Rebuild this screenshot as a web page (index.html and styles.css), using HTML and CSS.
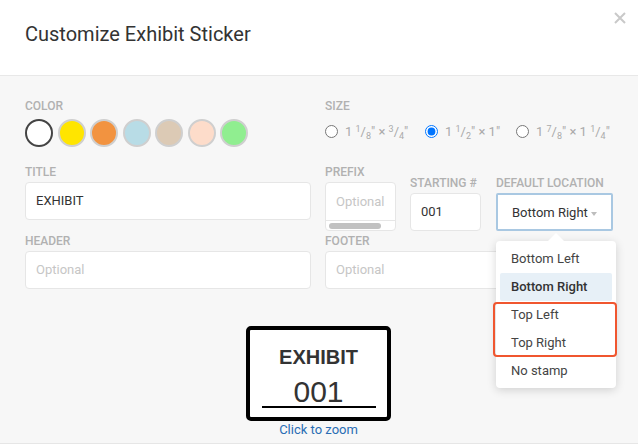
FILE: index.html
```html
<!DOCTYPE html>
<html lang="en">
<head>
    <meta charset="UTF-8">
    <meta name="viewport" content="width=device-width, initial-scale=1.0">
    <title>Customize Exhibit Sticker</title>
    <link rel="stylesheet" href="styles.css">
</head>
<body>
    <div class="modal">
        <div class="modal-header">
            <h1>Customize Exhibit Sticker</h1>
            <button class="close" type="button" aria-label="Close">
                <svg width="12" height="12" viewBox="0 0 12 12"><path d="M1 1L11 11M11 1L1 11" stroke="#c9c9c9" stroke-width="2"/></svg>
            </button>
        </div>

        <div class="modal-body">
            <div class="form-grid">
                <div class="col">
                    <label class="field-label color-label">Color</label>
                    <div class="swatches">
                        <span class="swatch selected" style="background:#ffffff"></span>
                        <span class="swatch" style="background:#ffe500"></span>
                        <span class="swatch" style="background:#f29340"></span>
                        <span class="swatch" style="background:#b8dce6"></span>
                        <span class="swatch" style="background:#dccab5"></span>
                        <span class="swatch" style="background:#fddcca"></span>
                        <span class="swatch" style="background:#90ee90"></span>
                    </div>

                    <div class="field title-field">
                        <label class="field-label">Title</label>
                        <div class="input">EXHIBIT</div>
                    </div>

                    <div class="field header-field">
                        <label class="field-label">Header</label>
                        <div class="input placeholder">Optional</div>
                    </div>
                </div>

                <div class="col">
                    <label class="field-label">Size</label>
                    <div class="sizes">
                        <label class="size size-1">
                            <input type="radio" name="size">
                            <span>1 <span class="frac"><sup>1</sup>/<sub>8</sub></span>" &times; <span class="frac"><sup>3</sup>/<sub>4</sub></span>"</span>
                        </label>
                        <label class="size size-2">
                            <input type="radio" name="size" checked>
                            <span>1 <span class="frac"><sup>1</sup>/<sub>2</sub></span>" &times; 1"</span>
                        </label>
                        <label class="size">
                            <input type="radio" name="size">
                            <span>1 <span class="frac"><sup>7</sup>/<sub>8</sub></span>" &times; 1 <span class="frac"><sup>1</sup>/<sub>4</sub></span>"</span>
                        </label>
                    </div>

                    <div class="numbering">
                        <div class="prefix">
                            <label class="field-label">Prefix</label>
                            <div class="input scroll-input">
                                <div class="placeholder">Optional</div>
                                <div class="scrollbar"><span class="thumb"></span></div>
                            </div>
                        </div>
                        <div class="starting">
                            <label class="field-label">Starting #</label>
                            <div class="input">001</div>
                        </div>
                        <div class="location">
                            <label class="field-label">Default Location</label>
                            <div class="select">
                                <span>Bottom Right</span>
                                <span class="arrow"></span>
                            </div>

                            <!-- open dropdown -->
                            <div class="dropdown">
                                <div class="option">Bottom Left</div>
                                <div class="option active">Bottom Right</div>
                                <div class="option-group">
                                    <div class="option">Top Left</div>
                                    <div class="option">Top Right</div>
                                </div>
                                <div class="option">No stamp</div>
                            </div>
                        </div>
                    </div>

                    <div class="field footer-field">
                        <label class="field-label">Footer</label>
                        <div class="input placeholder">Optional</div>
                    </div>
                </div>
            </div>

            <div class="preview">
                <div class="sticker">
                    <div class="sticker-title">EXHIBIT</div>
                    <div class="sticker-number">001</div>
                </div>
                <a class="zoom-link" href="#">Click to zoom</a>
            </div>
        </div>
    </div>
</body>
</html>
```

FILE: styles.css
```css
body {
    margin: 0;
    background-color: #fff;
    font-family: Roboto, "Liberation Sans", sans-serif;
    color: #333;
}
.modal-header {
    height: 76px;
    box-sizing: border-box;
    display: flex;
    justify-content: space-between;
    align-items: flex-start;
    padding: 0 12px 0 25px;
    border-bottom: 1px solid #e8e8e8;
}
.modal-header h1 {
    margin: 22px 0 0;
    font-size: 20px;
    line-height: 24px;
    font-weight: 400;
    color: #333;
}
.close {
    margin-top: 12px;
    padding: 0;
    border: none;
    background: none;
    width: 12px;
    height: 12px;
    cursor: pointer;
}
.close svg {
    display: block;
}
.modal-body {
    height: 368px;
    box-sizing: border-box;
    background-color: #f7f7f7;
    border-bottom: 1px solid #e6e6e6;
    padding: 23px 25px 0;
}
.form-grid {
    display: grid;
    grid-template-columns: 286px 288px;
    column-gap: 14px;
}
.field-label {
    display: block;
    font-size: 12px;
    line-height: 14px;
    font-weight: 500;
    color: #b1b1b1;
    text-transform: uppercase;
    margin-bottom: 3px;
}
.color-label {
    margin-bottom: 6px;
}
.swatches {
    display: flex;
    gap: 4.5px;
}
.swatch {
    width: 28px;
    height: 28px;
    box-sizing: border-box;
    border-radius: 50%;
    border: 2px solid #cfcfcf;
}
.swatch.selected {
    border-color: #444;
}
.title-field {
    margin-top: 18px;
}
.header-field {
    margin-top: 14px;
}
.input {
    height: 38px;
    box-sizing: border-box;
    background: #fff;
    border: 1px solid #e6e6e6;
    border-radius: 4px;
    padding: 0 10px;
    font-size: 13px;
    line-height: 36px;
    color: #333;
}
.placeholder {
    color: #c6c6c6;
}
.sizes {
    display: flex;
    align-items: center;
    height: 20px;
    margin-top: 8px;
}
.size {
    display: flex;
    align-items: center;
    gap: 7px;
    font-size: 13px;
    color: #aaa;
    white-space: nowrap;
}
.size-1 {
    width: 100px;
}
.size-2 {
    width: 91px;
}
.size input {
    margin: 0;
    width: 13px;
    height: 13px;
}
.frac sup,
.frac sub {
    font-size: 9px;
    line-height: 0;
}
.frac sup {
    vertical-align: 4px;
}
.frac sub {
    vertical-align: -3px;
}
.numbering {
    display: flex;
    align-items: flex-end;
    margin-top: 24px;
}
.prefix {
    width: 71px;
}
.starting {
    width: 71px;
    margin-left: 14px;
}
.location {
    width: 117px;
    margin-left: 15px;
    position: relative;
}
.scroll-input {
    height: 49px;
    padding: 0;
    line-height: normal;
}
.scroll-input .placeholder {
    height: 37px;
    line-height: 37px;
    padding-left: 10px;
}
.scrollbar {
    border-top: 1px solid #e6e6e6;
    height: 10px;
    padding: 2px 3px 0;
    box-sizing: border-box;
}
.thumb {
    display: block;
    width: 52px;
    height: 6px;
    border-radius: 3px;
    background: #c1c1c1;
}
.select {
    height: 38px;
    box-sizing: border-box;
    background: #fff;
    border: 2px solid #a9c8e2;
    border-radius: 2px;
    padding: 0 14px;
    display: flex;
    justify-content: space-between;
    align-items: center;
    font-size: 13px;
    color: #333;
}
.arrow {
    width: 0;
    height: 0;
    border-left: 3.5px solid transparent;
    border-right: 3.5px solid transparent;
    border-top: 4px solid #bdbdbd;
    margin-top: 3px;
}
.dropdown {
    position: absolute;
    top: calc(100% + 10px);
    left: 0;
    width: 120px;
    box-sizing: border-box;
    padding: 4px 4px 3px;
    background: #fff;
    border-radius: 4px;
    box-shadow: 0 2px 10px rgba(0, 0, 0, 0.16);
    z-index: 2;
}
.dropdown::before {
    content: "";
    position: absolute;
    top: -8px;
    left: 52px;
    border-left: 8px solid transparent;
    border-right: 8px solid transparent;
    border-bottom: 8px solid #fff;
}
.option {
    height: 28px;
    line-height: 28px;
    padding-left: 11px;
    font-size: 13px;
    color: #444;
    border-radius: 2px;
}
.option.active {
    background: #e7f0f7;
    font-weight: 500;
    color: #333;
}
.option-group {
    position: relative;
}
.option-group::after {
    content: "";
    position: absolute;
    top: 1px;
    bottom: 0;
    left: -7px;
    right: -5px;
    border: 2px solid #f0562f;
    border-radius: 4px;
}
.footer-field {
    margin-top: 3px;
}
.preview {
    display: flex;
    flex-direction: column;
    align-items: center;
    margin-top: 37px;
    margin-left: -1px;
}
.sticker {
    width: 145px;
    height: 95px;
    box-sizing: border-box;
    border: 4px solid #000;
    border-radius: 5px;
    background: #fff;
    padding-top: 17px;
    display: flex;
    flex-direction: column;
    align-items: center;
    font-family: "Liberation Sans", Arial, sans-serif;
    color: #333;
}
.sticker-title {
    font-size: 20px;
    line-height: 20px;
    font-weight: 700;
}
.sticker-number {
    margin-top: 11px;
    width: 114px;
    text-align: center;
    font-size: 30px;
    line-height: 28px;
    border-bottom: 2px solid #000;
}
.zoom-link {
    margin-top: 1px;
    font-size: 13px;
    line-height: 15px;
    color: #2a6db4;
    text-decoration: none;
}
```
